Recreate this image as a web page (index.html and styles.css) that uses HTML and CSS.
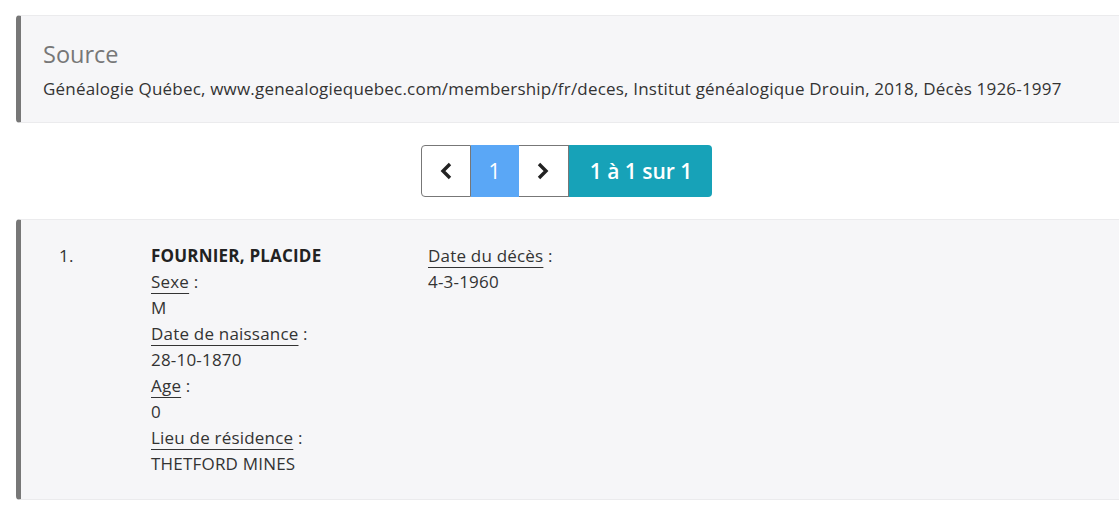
FILE: index.html
```html
<!DOCTYPE html>
<html>
<head>
    <meta charset="utf-8" />
    <title>Décès 1926-1997</title>
    <meta content="width=device-width, initial-scale=1" name="viewport" />
    <link rel="stylesheet" href="styles.css">
</head>
<body>
    <div class="page-container">
        <div class="panel source">
            <h3 class="source-title">Source</h3>
            <p class="source-text">Généalogie Québec, www.genealogiequebec.com/membership/fr/deces, Institut généalogique Drouin, 2018, Décès 1926-1997</p>
        </div>

        <div class="pager-wrap">
            <div class="pager">
                <a class="pager-btn pager-prev" href="#">
                    <svg width="14" height="18" viewBox="0 0 14 18"><polyline points="11,2 4,9 11,16" fill="none" stroke="#222" stroke-width="3.4"/></svg>
                </a>
                <a class="pager-btn pager-active" href="#">1</a>
                <a class="pager-btn pager-next" href="#">
                    <svg width="14" height="18" viewBox="0 0 14 18"><polyline points="3,2 10,9 3,16" fill="none" stroke="#222" stroke-width="3.4"/></svg>
                </a>
                <span class="pager-info">1 à 1 sur 1</span>
            </div>
        </div>

        <div class="panel record">
            <div class="record-num">1.</div>
            <div class="record-col record-main">
                <div class="record-name">FOURNIER, PLACIDE</div>
                <div><span class="lbl">Sexe</span> :</div>
                <div>M</div>
                <div><span class="lbl">Date de naissance</span> :</div>
                <div>28-10-1870</div>
                <div><span class="lbl">Age</span> :</div>
                <div>0</div>
                <div><span class="lbl">Lieu de résidence</span> :</div>
                <div>THETFORD MINES</div>
            </div>
            <div class="record-col">
                <div><span class="lbl">Date du décès</span> :</div>
                <div>4-3-1960</div>
            </div>
        </div>
    </div>
</body>
</html>
```

FILE: styles.css
```css
html, body{
    margin:0;
    padding:0;
    background:#fff;
    overflow:hidden;
}
body{
    font-family:"Open Sans", "Liberation Sans", sans-serif;
    font-size:17px;
    letter-spacing:0.2px;
    color:#333;
}
.page-container{
    padding:15px 0 0 16px;
    margin-right:-20px;
}
.panel{
    background:#f6f6f8;
    border-left:5px solid #777;
    border-top:1px solid #ebebed;
    border-bottom:1px solid #ebebed;
    border-radius:4px 0 0 4px;
}
.source{
    padding:24px 22px 21px 22px;
}
.source-title{
    margin:0;
    font-size:23.5px;
    font-weight:400;
    letter-spacing:0;
    line-height:29px;
    color:#777;
}
.source-text{
    margin:8px 0 0;
    line-height:24px;
}
.pager-wrap{
    display:flex;
    justify-content:center;
    padding:22px 0;
}
.pager{
    display:flex;
    height:52px;
    margin-right:22px;
}
.pager-btn{
    display:flex;
    align-items:center;
    justify-content:center;
    box-sizing:border-box;
    text-decoration:none;
    background:#fff;
    border:1px solid #777;
    width:50px;
}
.pager-prev{
    border-radius:4px 0 0 4px;
}
.pager-active{
    width:48px;
    background:#5aa7f6;
    border-color:#5aa7f6;
    color:#fff;
    font-size:21px;
}
.pager-next{
    border-left:none;
    width:50px;
}
.pager-info{
    display:flex;
    align-items:center;
    padding:0 20px 0 21px;
    background:#17a2b8;
    color:#fff;
    font-size:21px;
    letter-spacing:0;
    font-weight:600;
    border-radius:0 4px 4px 0;
}
.record{
    display:flex;
    padding:23px 0 22px 38px;
    line-height:26px;
}
.record-num{
    width:92px;
}
.record-main{
    width:277px;
}
.record-name{
    font-weight:700;
    color:#222;
}
.lbl{
    text-decoration:underline;
    text-underline-offset:5px;
    text-decoration-thickness:1px;
}
```
